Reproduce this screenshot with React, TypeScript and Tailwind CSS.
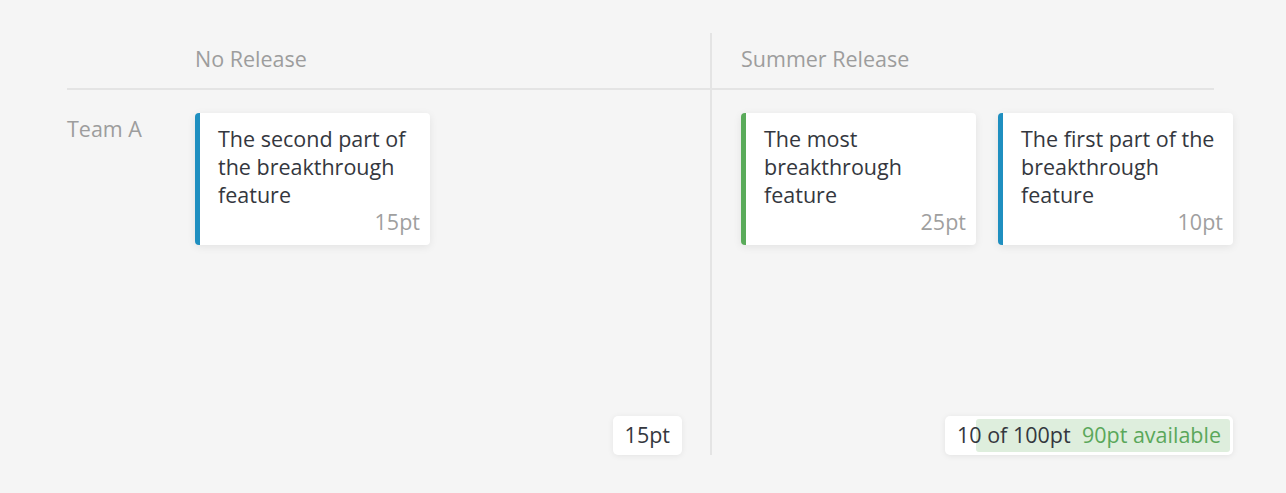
import React from 'react';

type Card = { title: string; points: number; color: string };

const noRelease: Card[] = [
  { title: 'The second part of the breakthrough feature', points: 15, color: 'border-l-[#1f8fc0]' },
];

const summerRelease: Card[] = [
  { title: 'The most breakthrough feature', points: 25, color: 'border-l-[#5aab5a]' },
  { title: 'The first part of the breakthrough feature', points: 10, color: 'border-l-[#1f8fc0]' },
];

const FeatureCard: React.FC<{ card: Card }> = ({ card }) => (
  <div
    className={`w-[235px] h-[132px] shrink-0 bg-white rounded-[4px] border-l-[5px] ${card.color} pl-[18px] pr-[10px] pt-[12px] pb-[12px] shadow-[0_2px_8px_rgba(0,0,0,0.08)] flex flex-col`}
  >
    <p className="text-[21.5px] leading-[28px] font-medium text-[#34373e]">{card.title}</p>
    <p className="text-[21.5px] leading-[22px] text-[#9f9f9f] text-right mt-auto">{card.points}pt</p>
  </div>
);

const App: React.FC = () => {
  return (
    <div
      className="min-h-screen bg-[#f5f5f5] pt-[33px] pl-[67px]"
      style={{ fontFamily: '"Open Sans", "Noto Sans", sans-serif' }}
    >
      <div className="flex">
        {/* Left: team label + No Release */}
        <div className="w-[643px] flex flex-col">
          <div className="h-[57px] border-b-2 border-[#e4e4e4] flex items-center pb-[2px] pl-[128px]">
            <span className="text-[21.5px] text-[#9d9d9d]">No Release</span>
          </div>
          <div className="h-[365px] flex pt-[23px]">
            <div className="w-[128px] shrink-0">
              <span className="block mt-[2px] text-[21.5px] leading-[28px] text-[#9d9d9d]">Team A</span>
            </div>
            <div className="flex-1 flex flex-col pr-[28px]">
              <div className="flex gap-[22px]">
                {noRelease.map((c, i) => (
                  <FeatureCard key={i} card={c} />
                ))}
              </div>
              <div className="mt-auto flex justify-end">
                <div className="h-[39px] px-[12px] bg-white rounded-[5px] shadow-[0_1px_6px_rgba(0,0,0,0.07)] flex items-center text-[21.5px] font-medium text-[#34373e]">
                  15pt
                </div>
              </div>
            </div>
          </div>
        </div>

        {/* Summer Release column */}
        <div className="w-[523px] border-l-2 border-[#e4e4e4] flex flex-col">
          <div className="w-[502px] h-[57px] border-b-2 border-[#e4e4e4] flex items-center pb-[2px] pl-[29px]">
            <span className="text-[21.5px] text-[#9d9d9d]">Summer Release</span>
          </div>
          <div className="h-[365px] flex flex-col pt-[23px] pl-[29px]">
            <div className="flex gap-[22px]">
              {summerRelease.map((c, i) => (
                <FeatureCard key={i} card={c} />
              ))}
            </div>
            <div className="mt-auto flex justify-start">
              <div className="ml-[204px] w-[288px] h-[39px] p-[3px] bg-white rounded-[5px] shadow-[0_1px_6px_rgba(0,0,0,0.08)]">
                <div className="relative h-full">
                  <div className="absolute top-0 bottom-0 right-0 w-[90%] bg-[#deeedd] rounded-[3px]" />
                  <div className="relative h-full flex items-center justify-between px-[9px] text-[21.5px] font-medium">
                    <span className="text-[#34373e]">10 of 100pt</span>
                    <span className="text-[#5aa75a]">90pt available</span>
                  </div>
                </div>
              </div>
            </div>
          </div>
        </div>
      </div>
    </div>
  );
};

export default App;
